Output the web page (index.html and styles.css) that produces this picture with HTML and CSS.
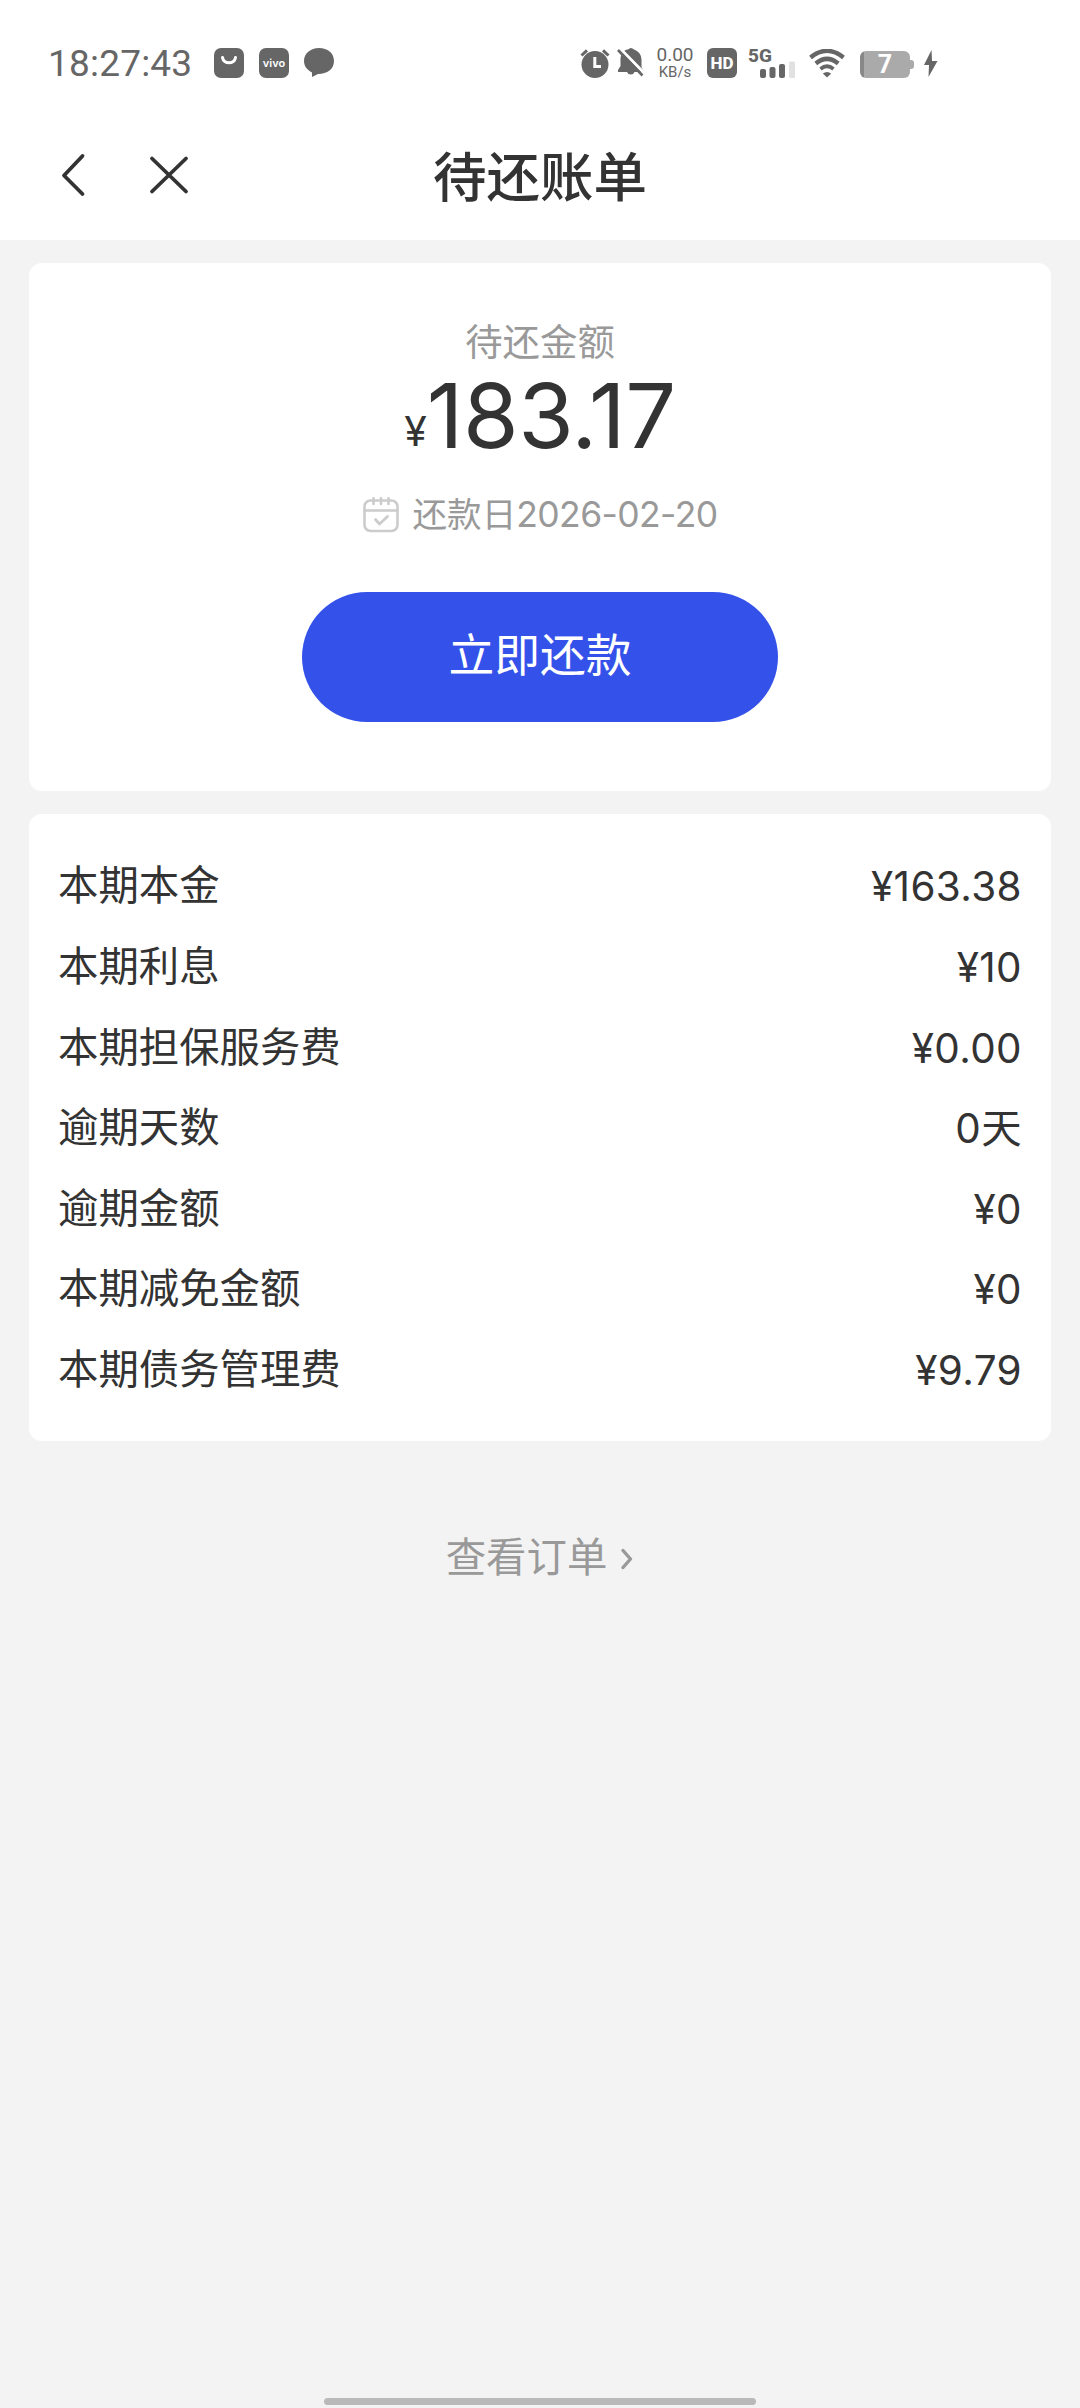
FILE: index.html
```html
<!DOCTYPE html>
<html lang="zh-CN">
<head>
<meta charset="utf-8">
<title>待还账单</title>
<link rel="stylesheet" href="styles.css">
</head>
<body>
<div class="page">
  <header class="top">
    <div class="status">
      <div class="status-left">
        <span class="time">18:27:43</span>
        <svg width="30" height="30" viewBox="0 0 30 30"><rect width="30" height="30" rx="7" fill="#666"/><path d="M8.500 9.500C9.500 16.500 20.500 16.500 21.500 9.500" fill="none" stroke="#fff" stroke-width="3" stroke-linecap="round"/></svg>
        <span class="vivo">vivo</span>
        <svg width="30" height="30" viewBox="0 0 30 30"><path d="M15 0C6.500 0 0 5.500 0 13c0 5 3 9 8 11.500V29l6-3c9.500 0 16-5 16-13S23.500 0 15 0z" fill="#666"/></svg>
      </div>
      <div class="status-right">
        <svg class="alarm" width="30" height="30" viewBox="0 0 30 30"><circle cx="15" cy="16.500" r="13.500" fill="#666"/><path d="M1.500 7.500L7 2.300M28.500 7.500L23 2.300" stroke="#666" stroke-width="3"/><path d="M14.800 9v9.500H21" fill="none" stroke="#fff" stroke-width="3"/></svg>
        <svg class="bell" width="28" height="30" viewBox="0 0 28 30"><path d="M3.500 10C4.500 4 8.500 1.500 11 1.500Q14-1.500 17 1.500C21 3 24.500 6 24.500 12v7l2.500 5H17.500a4 4 0 0 1-7.500 0H1v-2l2.500-4z" fill="#666"/><path d="M3 0.500L27.500 25.500" stroke="#fff" stroke-width="3"/><path d="M1 2L25.500 27.500" stroke="#666" stroke-width="2.600"/></svg>
        <span class="speed"><span class="rate">0.00</span><span class="unit">KB/s</span></span>
        <span class="hd">HD</span>
        <svg class="signal" width="49" height="36" viewBox="0 -6 49 36"><text class="net" x="0" y="13.500">5G</text><g fill="#666"><rect x="12" y="21" width="6" height="9" rx="2"/><rect x="21.500" y="19" width="6" height="11" rx="2"/><rect x="31" y="16" width="6" height="14" rx="2"/></g><rect x="41" y="13.500" width="6" height="16.500" rx="1.500" fill="#e1e1e1"/></svg>
        <svg class="wifi" width="36" height="29" viewBox="0 0 36 29"><g fill="none" stroke="#666" stroke-width="4.400"><path d="M1.500 8.500Q18-4.800 34.500 8.500"/><path d="M6.800 14.500Q18 5.200 29.200 14.500"/><path d="M11.500 20Q18 14.500 24.500 20" stroke-width="3.800"/></g><path d="M13.800 24.500Q18 21.500 22.200 24.500L18 28.500z" fill="#666"/></svg>
        <span class="battery"><span class="cell">7</span><span class="nub"></span></span>
        <svg class="bolt" width="15" height="27" viewBox="0 0 15 27"><path d="M8.500 0L1 15h5L5.500 27 14.500 11H9z" fill="#666"/></svg>
      </div>
    </div>
    <nav class="nav">
      <div class="nav-icons">
        <svg width="26" height="44" viewBox="0 0 26 44"><path d="M22.500 3L4 22.500 22.500 41" fill="none" stroke="#333" stroke-width="3.800" stroke-linecap="round" stroke-linejoin="round"/></svg>
        <svg width="42" height="40" viewBox="0 0 42 40"><path d="M4 3.500L38 36.500M38 3.500L4 36.500" fill="none" stroke="#333" stroke-width="3.800" stroke-linecap="round"/></svg>
      </div>
      <h1 class="title">待还账单</h1>
    </nav>
  </header>
  <main class="content">
    <section class="card summary">
      <div class="label">待还金额</div>
      <div class="amount"><span class="yen">¥</span><span class="figure">183.17</span></div>
      <div class="due">
        <svg width="36" height="36" viewBox="0 0 36 36" fill="none" stroke="#ccc" stroke-width="2.600" stroke-linecap="round" stroke-linejoin="round"><rect x="1.500" y="3.500" width="33" height="30.500" rx="6"/><path d="M1.500 13.500H34.500M10.500 1.200V7M18 1.200V7M25.500 1.200V7"/><path d="M12.500 22.500L16.500 27 24.500 19.500" stroke-width="2.800"/></svg>
        <span class="due-text">还款日<span class="date">2026-02-20</span></span>
      </div>
      <button class="pay" type="button">立即还款</button>
    </section>
    <section class="card details">
      <div class="row"><span>本期本金</span><span class="value">¥163.38</span></div>
      <div class="row"><span>本期利息</span><span class="value">¥10</span></div>
      <div class="row"><span>本期担保服务费</span><span class="value">¥0.00</span></div>
      <div class="row"><span>逾期天数</span><span class="value">0天</span></div>
      <div class="row"><span>逾期金额</span><span class="value">¥0</span></div>
      <div class="row"><span>本期减免金额</span><span class="value">¥0</span></div>
      <div class="row"><span>本期债务管理费</span><span class="value">¥9.79</span></div>
    </section>
    <a class="orders">查看订单<svg width="14" height="24" viewBox="0 0 14 24"><path d="M3 3.500L10.500 12 3 20.500" fill="none" stroke="#999" stroke-width="3.400" stroke-linecap="round" stroke-linejoin="round"/></svg></a>
  </main>
  <div class="home-bar"></div>
</div>
</body>
</html>
```
FILE: styles.css
```css
* { box-sizing: border-box; }
body {
  margin: 0;
  font-family: Roboto, "Noto Sans CJK SC", sans-serif;
  color: #333;
}
svg { display: block; flex: none; }
.page {
  width: 1080px;
  height: 2408px;
  background: #f3f3f3;
  display: flex;
  flex-direction: column;
}
.top { height: 240px; background: #fff; }
.status {
  height: 126px;
  padding: 0 142px 0 48px;
  display: flex;
  align-items: center;
  justify-content: space-between;
  color: #666;
}
.status-left { display: flex; align-items: center; gap: 15px; }
.time { font-size: 37px; line-height: 40px; width: 151px; padding-top: 1px; letter-spacing: 0.2px; }
.vivo {
  width: 30px;
  height: 30px;
  border-radius: 7px;
  background: #666;
  color: #fff;
  font: 600 11px/30px Inter, sans-serif;
  text-align: center;
}
.status-right { display: flex; align-items: center; }
.alarm { margin-right: -1px; }
.bell { margin-left: 8px; }
.speed {
  width: 40px;
  height: 34px;
  margin-left: 10px;
  display: flex;
  flex-direction: column;
  align-items: center;
  white-space: nowrap;
}
.rate { font-size: 19px; line-height: 18px; }
.unit { font-size: 15px; line-height: 16px; }
.hd {
  width: 30px;
  height: 30px;
  margin-left: 12px;
  border-radius: 6px;
  background: #666;
  color: #fff;
  font: 800 17px/31px Roboto, sans-serif;
  text-align: center;
}
.signal { margin: -6px 0 0 11px; }
.net { font: 800 19px Roboto, sans-serif; fill: #666; }
.wifi { margin-left: 12px; }
.battery { display: flex; align-items: center; margin: 2px 0 0 15px; }
.cell {
  width: 50px;
  height: 27px;
  border-radius: 6px;
  background: linear-gradient(90deg, #888 4px, #aaa 4px);
  color: #fff;
  font: 700 25px/28px Roboto, sans-serif;
  text-align: center;
}
.nub { width: 4px; height: 9px; background: #aaa; border-radius: 0 3px 3px 0; }
.bolt { margin-left: 9px; }
.nav {
  height: 114px;
  padding: 0 60px;
  display: grid;
  grid-template-columns: 1fr auto 1fr;
  align-items: center;
}
.nav-icons { display: flex; align-items: center; gap: 62px; margin-top: -16px; }
.title {
  margin: -9px 0 0;
  font-size: 53.5px;
  font-weight: 500;
  line-height: 80px;
}
.content {
  flex: 1;
  padding: 23px 29px 0;
  display: flex;
  flex-direction: column;
}
.card { background: #fff; border-radius: 13px; }
.summary {
  height: 528px;
  padding-top: 54px;
  display: flex;
  flex-direction: column;
  align-items: center;
}
.label { font-size: 37.4px; line-height: 52px; color: #999; }
.amount {
  display: flex;
  align-items: flex-start;
  height: 98px;
  font-family: Inter, sans-serif;
}
.yen { font-size: 41px; line-height: 124px; }
.figure { font-size: 90px; line-height: 94px; letter-spacing: -0.4px; }
.due {
  height: 44px;
  margin-top: 26px;
  display: flex;
  align-items: center;
  gap: 14px;
  color: #999;
  font-size: 34.6px;
  line-height: 44px;
}
.date { font-family: Inter, sans-serif; font-size: 35.5px; letter-spacing: -0.6px; }
.pay {
  width: 476px;
  height: 130px;
  margin-top: 55px;
  padding: 0;
  border: 0;
  border-radius: 65px;
  background: #3452ea;
  color: #fff;
  font-family: inherit;
  font-size: 45.8px;
  line-height: 126px;
}
.details { height: 627.5px; margin-top: 22.5px; padding: 33.5px 29px 29.5px; }
.row {
  height: 80.64px;
  display: flex;
  align-items: center;
  justify-content: space-between;
  font-size: 40.4px;
  line-height: 60px;
}
.value { font-family: Inter, "Noto Sans CJK SC", sans-serif; letter-spacing: 0.4px; }
.orders {
  margin-top: 88px;
  height: 60px;
  display: flex;
  align-items: center;
  justify-content: center;
  gap: 13px;
  font-size: 40.4px;
  line-height: 60px;
  color: #999;
}
.home-bar {
  width: 432px;
  height: 7px;
  margin: 0 auto 3px;
  border-radius: 4px;
  background: #b9b9b9;
}
```
